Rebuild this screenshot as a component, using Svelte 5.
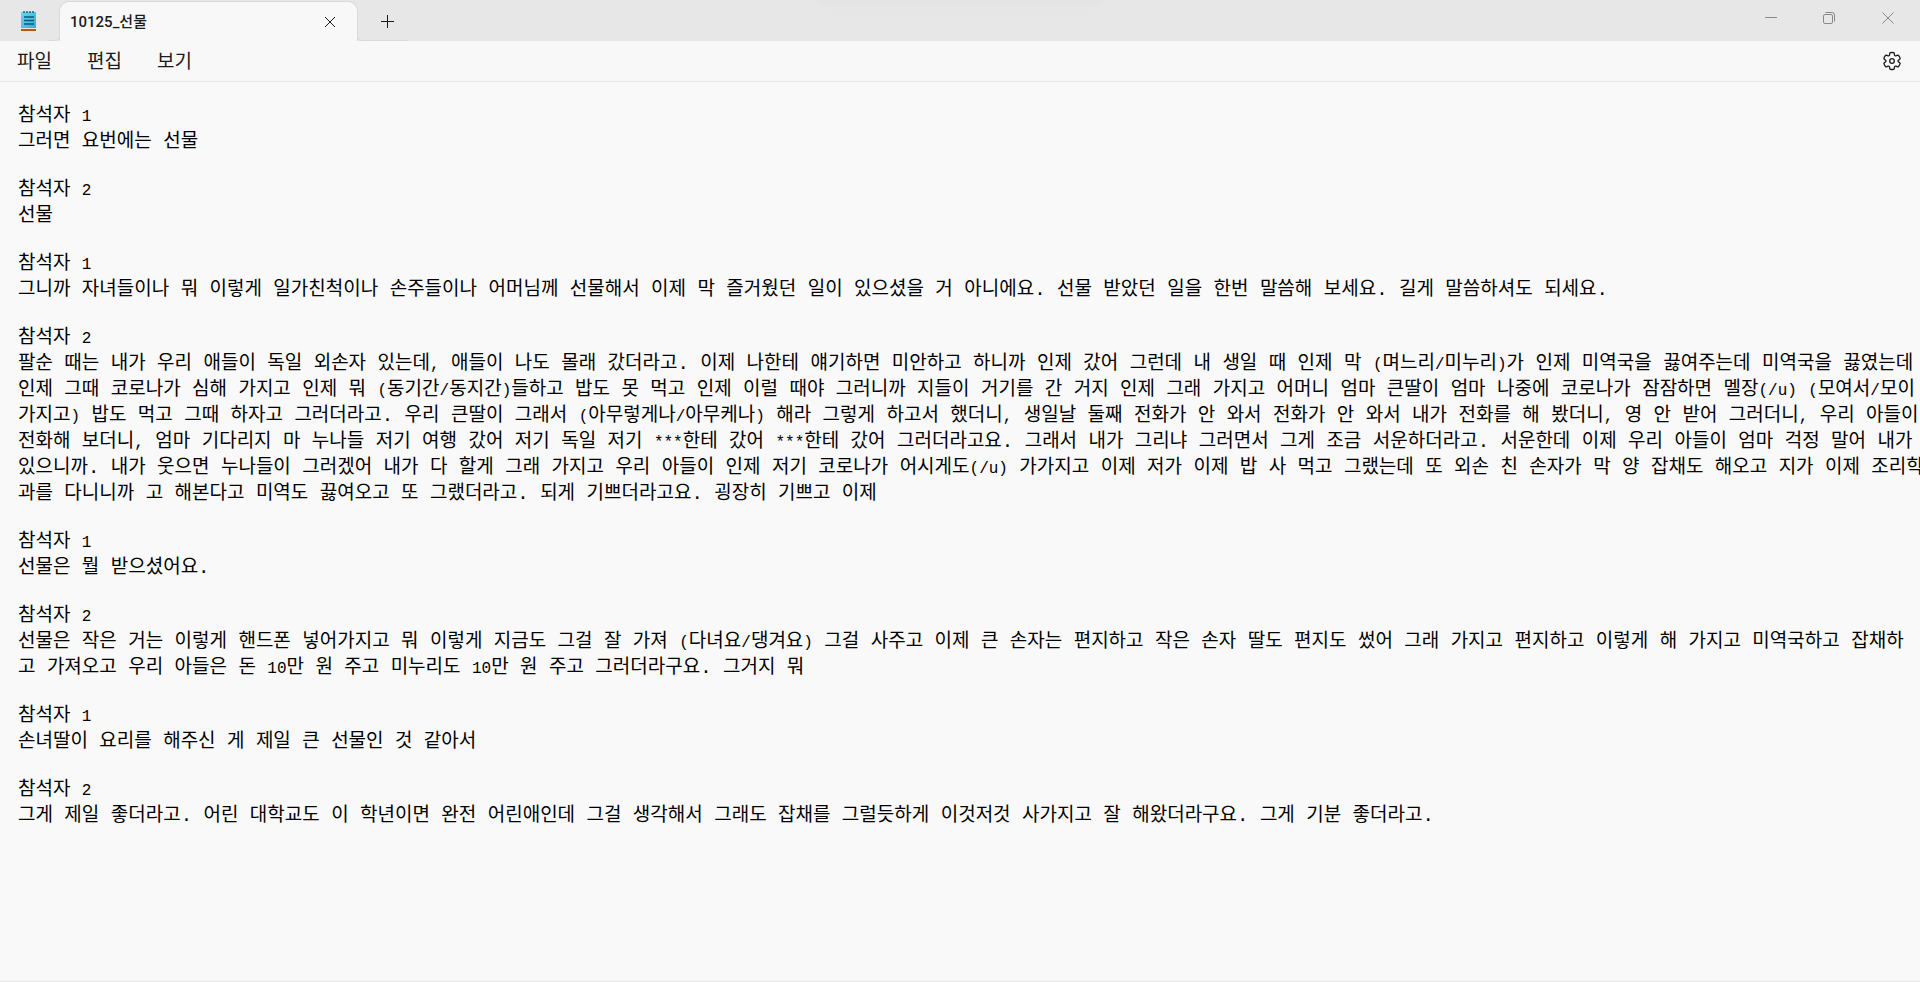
<script>
  // Name of the open file, shown on the tab
  let fileName = '10125_선물';
  let menus = ['파일', '편집', '보기'];

  // One entry per speaker turn, already broken into screen lines
  let turns = [
    { speaker: '참석자 1', lines: ['그러면 요번에는 선물'] },
    { speaker: '참석자 2', lines: ['선물'] },
    {
      speaker: '참석자 1',
      lines: [
        '그니까 자녀들이나 뭐 이렇게 일가친척이나 손주들이나 어머님께 선물해서 이제 막 즐거웠던 일이 있으셨을 거 아니에요. 선물 받았던 일을 한번 말씀해 보세요. 길게 말씀하셔도 되세요.'
      ]
    },
    {
      speaker: '참석자 2',
      lines: [
        '팔순 때는 내가 우리 애들이 독일 외손자 있는데, 애들이 나도 몰래 갔더라고. 이제 나한테 얘기하면 미안하고 하니까 인제 갔어 그런데 내 생일 때 인제 막 (며느리/미누리)가 인제 미역국을 끓여주는데 미역국을 끓였는데',
        '인제 그때 코로나가 심해 가지고 인제 뭐 (동기간/동지간)들하고 밥도 못 먹고 인제 이럴 때야 그러니까 지들이 거기를 간 거지 인제 그래 가지고 어머니 엄마 큰딸이 엄마 나중에 코로나가 잠잠하면 멜장(/u) (모여서/모이',
        '가지고) 밥도 먹고 그때 하자고 그러더라고. 우리 큰딸이 그래서 (아무렇게나/아무케나) 해라 그렇게 하고서 했더니, 생일날 둘째 전화가 안 와서 전화가 안 와서 내가 전화를 해 봤더니, 영 안 받어 그러더니, 우리 아들이',
        '전화해 보더니, 엄마 기다리지 마 누나들 저기 여행 갔어 저기 독일 저기 ***한테 갔어 ***한테 갔어 그러더라고요. 그래서 내가 그리냐 그러면서 그게 조금 서운하더라고. 서운한데 이제 우리 아들이 엄마 걱정 말어 내가',
        '있으니까. 내가 웃으면 누나들이 그러겠어 내가 다 할게 그래 가지고 우리 아들이 인제 저기 코로나가 어시게도(/u) 가가지고 이제 저가 이제 밥 사 먹고 그랬는데 또 외손 친 손자가 막 양 잡채도 해오고 지가 이제 조리학',
        '과를 다니니까 고 해본다고 미역도 끓여오고 또 그랬더라고. 되게 기쁘더라고요. 굉장히 기쁘고 이제'
      ]
    },
    { speaker: '참석자 1', lines: ['선물은 뭘 받으셨어요.'] },
    {
      speaker: '참석자 2',
      lines: [
        '선물은 작은 거는 이렇게 핸드폰 넣어가지고 뭐 이렇게 지금도 그걸 잘 가져 (다녀요/댕겨요) 그걸 사주고 이제 큰 손자는 편지하고 작은 손자 딸도 편지도 썼어 그래 가지고 편지하고 이렇게 해 가지고 미역국하고 잡채하',
        '고 가져오고 우리 아들은 돈 10만 원 주고 미누리도 10만 원 주고 그러더라구요. 그거지 뭐'
      ]
    },
    { speaker: '참석자 1', lines: ['손녀딸이 요리를 해주신 게 제일 큰 선물인 것 같아서'] },
    {
      speaker: '참석자 2',
      lines: [
        '그게 제일 좋더라고. 어린 대학교도 이 학년이면 완전 어린애인데 그걸 생각해서 그래도 잡채를 그럴듯하게 이것저것 사가지고 잘 해왔더라구요. 그게 기분 좋더라고.'
      ]
    }
  ];

  // Digits, brackets and marks are set a little smaller than the Hangul
  const latin = /([0-9a-z()/*,]+)/;

  function splitRuns(line) {
    return line
      .split(latin)
      .filter((text) => text !== '')
      .map((text) => ({ text, isLatin: latin.test(text) }));
  }
</script>

<div class="window">
  <header class="titlebar">
    <svg class="app-icon" width="16" height="21" viewBox="0 0 16 21" aria-hidden="true">
      <defs>
        <linearGradient id="page" x1="0" y1="0" x2="1" y2="1">
          <stop offset="0" stop-color="#6fd6ee" />
          <stop offset="1" stop-color="#35abd0" />
        </linearGradient>
      </defs>
      <rect x="0" y="17" width="15" height="3" fill="#b35a10" />
      <rect x="0" y="17" width="15" height="1" fill="#f4e3d3" />
      <rect x="0" y="1" width="15" height="16" fill="url(#page)" />
      <path d="M3 0v2M6 0v2M9 0v2M12 0v2" stroke="#12607f" stroke-width="1.4" />
      <path d="M3 6h10M3 9.5h10M3 13h10" stroke="#0b5a7c" stroke-width="1.6" />
    </svg>

    <div class="tab">
      <span class="tab-name">{fileName}</span>
      <button class="tab-close" aria-label="탭 닫기">
        <svg width="12" height="12" viewBox="0 0 12 12"><path d="M1 1l10 10M11 1L1 11" /></svg>
      </button>
    </div>

    <button class="new-tab" aria-label="새 탭">
      <svg width="13" height="13" viewBox="0 0 13 13"><path d="M6.5 0v13M0 6.5h13" /></svg>
    </button>

    <div class="captions">
      <button class="minimize" aria-label="최소화">
        <svg width="12" height="12" viewBox="0 0 12 12"><path d="M0 5.5h12" /></svg>
      </button>
      <button class="restore" aria-label="이전 크기로 복원">
        <svg width="12" height="12" viewBox="0 0 12 12">
          <rect x="0.5" y="2.5" width="9" height="9" rx="1.5" />
          <path d="M2.5 .5H9A2.5 2.5 0 0 1 11.5 3v6.5" />
        </svg>
      </button>
      <button class="close" aria-label="닫기">
        <svg width="12" height="12" viewBox="0 0 12 12"><path d="M.5 .5l11 11M11.5 .5l-11 11" /></svg>
      </button>
    </div>
  </header>

  <nav class="menubar">
    {#each menus as menu}
      <button class="menu">{menu}</button>
    {/each}
    <button class="settings" aria-label="설정">
      <svg width="20" height="20" viewBox="0 0 20 20">
        <path
          d="M1.91 7.38A8.5 8.5 0 0 1 3.7 4.3a.5.5 0 0 1 .54-.13l1.92.68a1 1 0 0 0 1.32-.76l.36-2a.5.5 0 0 1 .4-.4 8.53 8.53 0 0 1 3.55 0c.2.04.35.2.38.4l.37 2a1 1 0 0 0 1.32.76l1.92-.68a.5.5 0 0 1 .54.13 8.5 8.5 0 0 1 1.78 3.08c.06.2 0 .4-.15.54l-1.56 1.32a1 1 0 0 0 0 1.52l1.56 1.32a.5.5 0 0 1 .15.54 8.5 8.5 0 0 1-1.78 3.08.5.5 0 0 1-.54.13l-1.92-.68a1 1 0 0 0-1.32.76l-.37 2a.5.5 0 0 1-.38.4 8.53 8.53 0 0 1-3.56 0 .5.5 0 0 1-.39-.4l-.36-2a1 1 0 0 0-1.32-.76l-1.92.68a.5.5 0 0 1-.54-.13 8.5 8.5 0 0 1-1.78-3.08.5.5 0 0 1 .15-.54l1.56-1.32a1 1 0 0 0 0-1.52L2.06 7.92a.5.5 0 0 1-.15-.54Z"
        />
        <circle cx="10" cy="10" r="2.3" />
      </svg>
    </button>
  </nav>

  <div
    class="editor"
    contenteditable="true"
    role="textbox"
    tabindex="0"
    aria-multiline="true"
    aria-label={fileName}
    spellcheck="false"
  >
    {#each turns as turn}
      <div class="turn">
        {#each [turn.speaker, ...turn.lines] as line}
          <div class="line">{#each splitRuns(line) as run}{#if run.isLatin}<span class="latin">{run.text}</span>{:else}{run.text}{/if}{/each}</div>
        {/each}
      </div>
    {/each}
  </div>
</div>

<style>
  :global(body) {
    margin: 0;
    background: #f9f9f9;
  }

  .window {
    display: flex;
    flex-direction: column;
    box-sizing: border-box;
    min-height: 100vh;
    border-bottom: 1px solid #e6e6e6;
    background: #f9f9f9;
    color: #1b1b1b;
    font-family: Roboto, "Noto Sans CJK KR", sans-serif;
    overflow: hidden;
  }

  button {
    display: flex;
    align-items: center;
    justify-content: center;
    padding: 0;
    border: 0;
    background: none;
    color: inherit;
    font: inherit;
  }

  svg {
    display: block;
    flex: none;
  }

  button svg {
    fill: none;
    stroke: currentColor;
  }

  /* Title bar */
  .titlebar {
    position: relative;
    display: flex;
    height: 41px;
    background: #e7e7e7;
  }

  /* Soft shade at the top centre of the title bar */
  .titlebar::before {
    content: '';
    position: absolute;
    top: -8px;
    left: 50%;
    width: 280px;
    height: 8px;
    margin-left: -140px;
    box-shadow: 0 0 14px rgba(0, 0, 0, 0.05);
  }

  .app-icon {
    margin: 11px 22px 0 21px;
  }

  .tab {
    position: relative;
    display: flex;
    align-items: center;
    justify-content: space-between;
    box-sizing: border-box;
    width: 299px;
    height: 40px;
    margin-top: 1px;
    padding: 0 12px 0 10px;
    border: 1px solid #dadada;
    border-bottom: 0;
    border-radius: 10px 10px 0 0;
    background: #f8f8f8;
  }

  /* Thin rule under the strip on both sides of the tab */
  .tab::before,
  .tab::after {
    content: '';
    position: absolute;
    bottom: 0;
    height: 5px;
    border-bottom: 1px solid #dadada;
  }

  .tab::before {
    right: 100%;
    width: 10px;
    border-right: 1px solid #dadada;
    border-bottom-right-radius: 5px;
  }

  .tab::after {
    left: 100%;
    width: 50px;
    border-left: 1px solid #dadada;
    border-bottom-left-radius: 5px;
  }

  .tab-name {
    font-size: 15px;
    font-weight: 500;
    line-height: 20px;
  }

  .tab-close {
    width: 30px;
    height: 26px;
  }

  .new-tab {
    width: 40px;
    height: 27px;
    margin: 8px 0 0 9px;
  }

  .captions {
    display: flex;
    margin-left: auto;
    color: #8a8a8a;
  }

  .captions button {
    height: 36px;
  }

  .minimize {
    width: 62px;
  }

  .restore {
    width: 54px;
  }

  .close {
    width: 64px;
  }

  /* Menu bar */
  .menubar {
    display: flex;
    align-items: center;
    box-sizing: border-box;
    height: 41px;
    padding: 0 18px 0 17px;
    border-bottom: 1px solid #e6e6e6;
    background: #f8f8f8;
  }

  .menu {
    margin-right: 35px;
    padding-top: 2px;
    font-size: 19px;
    line-height: 28px;
  }

  .settings {
    margin-left: auto;
  }

  .settings svg {
    stroke-width: 1.3;
  }

  /* Document */
  .editor {
    flex: 1;
    padding: 21px 0 0 18px;
    outline: none;
    color: #000;
    font-family: "Liberation Mono", "Noto Sans CJK KR", monospace;
    font-size: 19px;
    line-height: 26px;
  }

  .turn {
    margin-bottom: 22px;
  }

  .line {
    white-space: pre;
  }

  .latin {
    font-size: 16px;
    line-height: 20px;
  }
</style>
